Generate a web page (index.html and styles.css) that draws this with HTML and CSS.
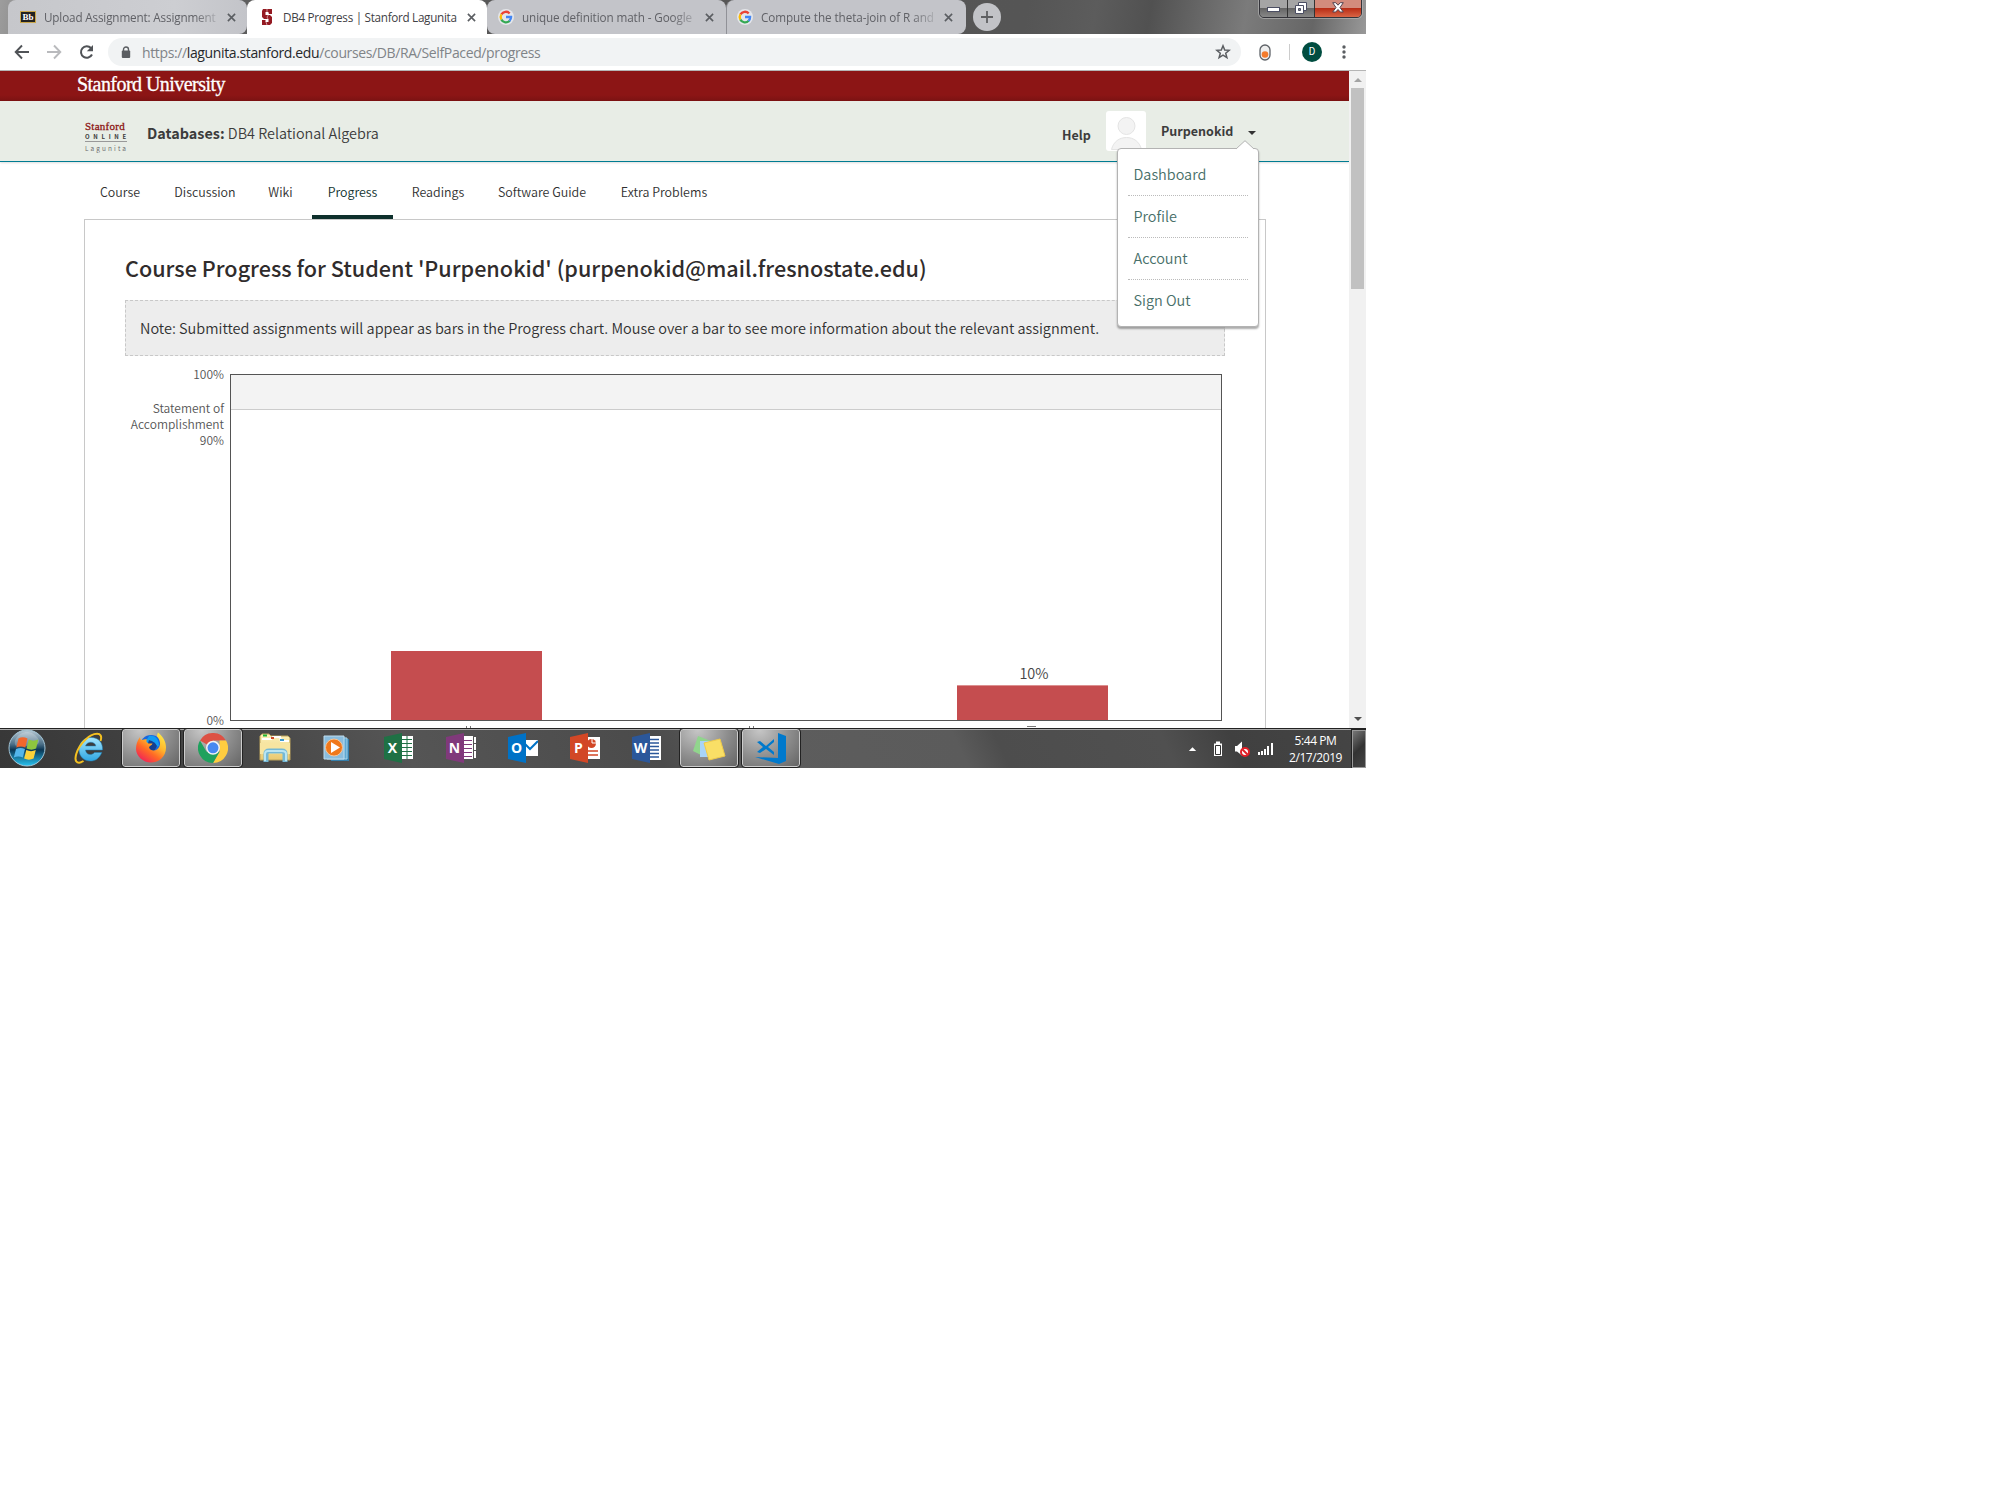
FILE: index.html
```html
<!DOCTYPE html>
<html lang="en">
<head>
<meta charset="utf-8">
<title>DB4 Progress | Stanford Lagunita</title>
<link rel="stylesheet" href="styles.css">
</head>
<body>
<svg width="0" height="0" class="defs" aria-hidden="true">
  <defs>
    <symbol id="close" viewBox="0 0 10 10"><path d="M1 1l8 8M9 1l-8 8" stroke="#5b5e62" stroke-width="1.8"/></symbol>
    <symbol id="google" viewBox="0 0 16 16">
      <circle cx="8" cy="8" r="8" fill="#e4e6ea"/>
      <g fill="none" stroke-width="2.3">
        <path d="M3.4 5.4A5.2 5.2 0 0 1 11.7 4.4" stroke="#ea4335"/>
        <path d="M3.4 10.6A5.2 5.2 0 0 1 3.4 5.4" stroke="#fbbc05"/>
        <path d="M11.7 11.8A5.2 5.2 0 0 1 3.4 10.6" stroke="#34a853"/>
        <path d="M8 8h5.1A5.1 5.1 0 0 1 11.5 11.8" stroke="#4285f4"/>
      </g>
    </symbol>
    <linearGradient id="gStart" x1="0" y1="0" x2="0" y2="1"><stop offset="0" stop-color="#b9cbd6"/><stop offset=".4" stop-color="#496d86"/><stop offset=".55" stop-color="#0b3654"/><stop offset="1" stop-color="#27c4f2"/></linearGradient>
    <linearGradient id="gFox" x1=".9" y1="0" x2=".2" y2="1"><stop offset="0" stop-color="#fff04a"/><stop offset=".4" stop-color="#ffb52c"/><stop offset=".65" stop-color="#ff6a25"/><stop offset="1" stop-color="#ef1a5e"/></linearGradient>
    <linearGradient id="gIe" x1="0" y1="0" x2="0" y2="1"><stop offset="0" stop-color="#a5e6fd"/><stop offset="1" stop-color="#2fa6e2"/></linearGradient>
    <linearGradient id="gFolder" x1="0" y1="0" x2="0" y2="1"><stop offset="0" stop-color="#fdf3bd"/><stop offset="1" stop-color="#e9c970"/></linearGradient>
  </defs>
</svg>
<div class="desktop">
  <header class="tabstrip">
    <div class="tab first">
      <span class="bb">Bb</span>
      <span class="tab-title t1">Upload Assignment: Assignment</span>
      <svg class="x"><use href="#close"/></svg>
    </div>
    <div class="tab active">
      <svg class="fav" viewBox="0 0 16 16"><path d="M4 0h9v5H9.500V3H6.500v3H11l2 2v6l-2 2H3v-5h3.500v2h3v-3H5L3 8V2z" fill="#941a22"/><path d="M8 0v3l2 2-2 3 1 2-2 3 1 3" stroke="#fff" stroke-width=".7" fill="none" opacity=".75"/></svg>
      <span class="tab-title t2">DB4 Progress | Stanford Lagunita</span>
      <svg class="x"><use href="#close"/></svg>
    </div>
    <div class="tab">
      <svg class="fav"><use href="#google"/></svg>
      <span class="tab-title t3">unique definition math - Google</span>
      <svg class="x"><use href="#close"/></svg>
    </div>
    <div class="tab last">
      <svg class="fav"><use href="#google"/></svg>
      <span class="tab-title t4">Compute the theta-join of R and</span>
      <svg class="x"><use href="#close"/></svg>
    </div>
    <div class="newtab"><svg width="12" height="12"><path d="M6 0v12M0 6h12" stroke="#5f6062" stroke-width="1.8"/></svg></div>
    <div class="controls">
      <span class="ctl min"><svg width="13" height="6"><rect x=".5" y=".5" width="12" height="4" fill="#fff" stroke="#4b4e63"/></svg></span>
      <span class="ctl max"><svg width="12" height="12"><path d="M3.500 .5h8v8h-8z" fill="#fff" stroke="#4b4e63"/><path d="M.5 3.500h8v8h-8z" fill="#fff" stroke="#4b4e63"/><path d="M3.500 6.500h2v2h-2z" fill="#888" stroke="#4b4e63"/></svg></span>
      <span class="ctl shut"><svg width="12" height="11" viewBox="0 0 12 11"><path d="M.7.7h3L6 3.200 8.300.7h3L8 5.500l3.300 4.500h-3L6 7.500 3.700 10h-3L4 5.500z" fill="#fff" stroke="#524350"/></svg></span>
    </div>
  </header>

  <div class="toolbar">
    <svg class="nav-icons" width="79" height="36" fill="none" stroke-width="1.9">
      <path d="M29 18H16M22 11.500L15.700 18l6.300 6.500" stroke="#505357"/>
      <path d="M47 18h13M54 11.500l6.300 6.500-6.300 6.500" stroke="#b9babd"/>
    </svg>
    <svg class="reload" width="16" height="16" fill="none"><path d="M13 10.500A5.800 5.800 0 1 1 12 4" stroke="#505357" stroke-width="2"/><path d="M14 1v6.200H7.800z" fill="#505357"/></svg>
    <div class="omnibox">
      <svg class="lock" width="10" height="13"><path d="M2.500 5V3.500a2.500 2.500 0 0 1 5 0V5" fill="none" stroke="#5b5e62" stroke-width="1.400"/><rect x=".8" y="4.500" width="8.400" height="7.500" rx="1" fill="#5b5e62"/></svg>
      <span class="url">https://<b>lagunita.stanford.edu</b>/courses/DB/RA/SelfPaced/progress</span>
      <svg class="star" width="16" height="16" viewBox="0 0 16 16"><path d="M8 1.800l1.700 4.200 4.500.3-3.500 2.900 1.200 4.400L8 11.200l-3.900 2.400 1.200-4.400L1.800 6.300l4.500-.3z" fill="none" stroke="#5b5e62" stroke-width="1.500"/></svg>
    </div>
    <svg class="ext" width="12" height="17"><rect x="1" y="1" width="10" height="15" rx="5" fill="#eee" stroke="#5e6267" stroke-width="1.300"/><circle cx="6" cy="10.500" r="3.300" fill="#f47b2c"/></svg>
    <i class="divider"></i>
    <span class="profile">D</span>
    <svg class="dots" width="4" height="14" fill="#5b5e62"><circle cx="2" cy="2" r="1.700"/><circle cx="2" cy="7" r="1.700"/><circle cx="2" cy="12" r="1.700"/></svg>
  </div>

  <div class="viewport">
    <div class="page">
      <div class="brand"><span>Stanford University</span></div>
      <div class="site-head">
        <div class="logo"><span class="l1">Stanford</span><span class="l2">ONLINE</span><span class="l3">Lagunita</span></div>
        <div class="course"><b>Databases:</b> DB4 Relational Algebra</div>
        <a class="help">Help</a>
        <svg class="avatar" width="40" height="40"><rect width="40" height="40" rx="3" fill="#fff"/><circle cx="20.500" cy="15" r="8.500" fill="#f3f3f3" stroke="#e4e4e4"/><path d="M5.500 38.500c2-8 8-12 15-12s13 4 15 12z" fill="#f3f3f3" stroke="#e4e4e4"/></svg>
        <span class="user">Purpenokid</span>
        <i class="caret"></i>
      </div>
      <nav class="course-nav">
        <a class="n1">Course</a><a class="n2">Discussion</a><a class="n3">Wiki</a><a class="n4 current">Progress</a><a class="n5">Readings</a><a class="n6">Software Guide</a><a class="n7">Extra Problems</a>
      </nav>
      <main class="content">
        <h1>Course Progress for Student 'Purpenokid' (purpenokid@mail.fresnostate.edu)</h1>
        <p class="note">Note: Submitted assignments will appear as bars in the Progress chart. Mouse over a bar to see more information about the relevant assignment.</p>
        <div class="chart">
          <div class="axis">
            <span class="top">100%</span>
            <span class="mid">Statement of<br>Accomplishment<br>90%</span>
            <span class="bottom">0%</span>
          </div>
          <div class="plot">
            <div class="band"></div>
            <div class="bars">
              <div class="bar a"></div>
              <div class="barwrap"><span>10%</span><div class="bar b"></div></div>
            </div>
          </div>
        </div>
        <div class="ticks"><i></i><i></i><i></i></div>
      </main>
      <div class="menu">
        <svg class="notch" width="18" height="18"><path d="M0 9L9 .7 18 9v2L9 17 0 11z" fill="#fff"/><path d="M0 9L9 .7 18 9" fill="none" stroke="#b3b3b3"/></svg>
        <a>Dashboard</a><a>Profile</a><a>Account</a><a>Sign Out</a>
      </div>
    </div>
    <div class="scroll"><i class="up"></i><i class="thumb"></i><i class="down"></i></div>
  </div>

  <footer class="taskbar">
    <div class="start"><svg width="38" height="38" viewBox="0 0 38 38"><circle cx="19" cy="19" r="18" fill="url(#gStart)" stroke="#a3c4d5"/><path d="M8 17C4 12 11 3 19 3s15 9 11 12c-7 5-15 0-22 2z" fill="#fff" opacity=".22"/><path d="M10.500 9.500c3-2 6-1.500 9 0l-2.200 9c-3-1.500-6-1.500-9 0z" fill="#f1672d"/><path d="M20.800 10.500c3 1.500 6 1.500 9.500 0l-2.200 9c-3 1.500-6.500 1.500-9.500 0z" fill="#8ec63f"/><path d="M8 20c3-1.500 6-1.500 9 0l-2.200 8.500c-3-1.500-6-1.500-9 0z" fill="#53b5ea"/><path d="M18.300 21c3 1.500 6.500 1.500 9.500 0l-2.200 8.500c-3 1.500-6.500 1.500-9.500 0z" fill="#fcd23a"/></svg></div>
    <div class="app"><svg width="32" height="32" viewBox="0 0 32 32"><path d="M29.500 18H12.500c.5 5 6 6 9 2.500h7.300C26 27 22 29 17.500 29 11 29 6 24.500 6 17.500S11 5.500 18 5.500c7.500 0 12 5 11.500 12.500zM12.500 14h10.300c-.8-5-9-5-10.300 0z" fill="url(#gIe)" stroke="#1e80b9" stroke-width=".5"/><path d="M27.500 9C31-1 20 0 12 8 3 17 0 29 5 30.500c2 .5 4-.5 5.500-1.500" fill="none" stroke="#f4c020" stroke-width="2"/></svg></div>
    <div class="app open"><svg width="32" height="32" viewBox="0 0 32 32"><circle cx="16" cy="14" r="11" fill="#1867df"/><path d="M14 4c5-1 10 2 10 10l-9 3-6-5z" fill="#129cf2"/><path d="M14 8c3 1 6 2 8 6l-4 7-7-3z" fill="#153f8f"/><path d="M5 5c0 2 .5 3 2 3 2-1 4-1 5-.5-1 1-1 3 1.500 4h4c-.5 2-3 2-3.500 4 1 3 5 4 8 2 5-4 3-10 0-13 0-2 .5-3 1-4 5 4 8 9 8 15 0 9-7 15-15 15S1 24 1 17c0-4 1-8 4-12z" fill="url(#gFox)"/></svg></div>
    <div class="app open"><svg width="30" height="30" viewBox="0 0 30 30"><path d="M15 15L2 7.500A15 15 0 0 1 28 7.500H15z" fill="#dd5144"/><path d="M28 7.500A15 15 0 0 1 15 30l6.500-11.200V7.500z" fill="#ffcd40"/><path d="M2 7.500A15 15 0 0 0 15 30l6.500-11.200L8.500 18.700z" fill="#1fa15d"/><circle cx="15" cy="14.800" r="7" fill="#f3f3f3"/><circle cx="15" cy="14.800" r="5.500" fill="#4688f1"/></svg></div>
    <div class="app"><svg width="34" height="32" viewBox="0 0 34 32"><path d="M2 28V4l2-2h7l2 2h17l2 2v22z" fill="url(#gFolder)" stroke="#bda45c"/><path d="M4 7h9l2-2h7l1 4h8" fill="none" stroke="#fff" stroke-width="2"/><path d="M5 3.500h4" stroke="#1eb534" stroke-width="2"/><path d="M13 6h3" stroke="#ce4a2a" stroke-width="2"/><path d="M22 8h4" stroke="#3c98cf" stroke-width="2"/><path d="M2 11h30v11H2z" fill="#f7e5a1"/><path d="M8 30V22q0-3 3-3h13q3 0 3 3v8" fill="none" stroke="#75b9d6" stroke-width="5"/><path d="M7 29V22q0-3 3-3h14q4 0 4 3v7" fill="none" stroke="#b9e5f3" stroke-width="2"/></svg></div>
    <div class="app"><svg class="wmp" width="28" height="28" viewBox="0 0 28 28"><path d="M6 4l20 1v22H8z" fill="#347eab"/><path d="M4 3l20 1v21H4z" fill="#5fa8d2" stroke="#a5d4ed"/><path d="M1 2h20v23H1z" fill="#8abdde" stroke="#bfddee"/><circle cx="11" cy="13.500" r="8.500" fill="#f0781b" stroke="#f6c69a"/><path d="M8 8l9 5.500L8 19z" fill="#fff"/></svg></div>
    <div class="app"><span class="office"><svg width="30" height="32"><path d="M17 4h12v23H17z" fill="#fff"/><path d="M17 7.500h11M17 11.500h11M17 15.500h11M17 19.500h11M17 23.500h11M23 4v23" stroke="#1f7145"/><path d="M0 5L18 1v30L0 27z" fill="#1f7145"/></svg><b>X</b></span></div>
    <div class="app"><span class="office"><svg width="30" height="32"><path d="M17 4h10v23H17zM28 5h2v6h-2zM28 12h2v6h-2zM28 19h2v7h-2z" fill="#fff"/><path d="M17 8.500h9M17 12.500h9M17 16.500h9M17 20.500h9M17 24.500h9" stroke="#80397b"/><path d="M0 5L18 1v30L0 27z" fill="#80397b"/></svg><b>N</b></span></div>
    <div class="app"><span class="office"><svg width="30" height="32"><path d="M17 8h13v16H17z" fill="#fff"/><path d="M17 12l5 5 8-8" fill="none" stroke="#0072c6" stroke-width="2"/><path d="M0 5L18 1v30L0 27z" fill="#0072c6"/></svg><b>O</b></span></div>
    <div class="app"><span class="office"><svg width="30" height="32"><path d="M17 5h13v22H17z" fill="#fff"/><circle cx="21.500" cy="11.500" r="4.500" fill="#d24726"/><path d="M22 6v5h5" fill="none" stroke="#fff"/><path d="M18 19h10M18 23h10" stroke="#d24726" stroke-width="1.500"/><path d="M0 5L18 1v30L0 27z" fill="#d24726"/></svg><b>P</b></span></div>
    <div class="app"><span class="office"><svg width="30" height="32"><path d="M17 4h12v24H17z" fill="#fff"/><path d="M17 7.500h10M17 11h10M17 14.500h10M17 18h10M17 21.500h10M17 25h10" stroke="#2b579a" stroke-width="1.300"/><path d="M0 5L18 1v30L0 27z" fill="#2b579a"/></svg><b>W</b></span></div>
    <div class="app open"><svg width="34" height="28" viewBox="0 0 34 28"><path d="M6 2l13 5-6 16L1 17z" fill="#91d58d"/><path d="M8 7h15v16H8z" fill="#a8d4f7"/><path d="M12 9l16-4 5 17-16 4z" fill="#f9df66" stroke="#f0cb49"/></svg></div>
    <div class="app open"><svg width="34" height="32" viewBox="0 0 34 32"><path d="M24 1l8 3v25l-7 3L1 25l23 1z" fill="#0079cc"/><path d="M3 10l3-1 6 5 8-7v3l-6 5 6 5v3l-8-6-6 4-3-1 6-5z" fill="#0079cc"/></svg></div>
    <div class="tray">
      <svg class="chev" width="9" height="6"><path d="M.8 5L4.500 1.200 8.200 5z" fill="#fff"/></svg>
      <svg class="bat" width="10" height="16"><path d="M3 .5h4v2h2v12.500H1V2.500h2z" fill="#fff"/><path d="M2.500 4.500h5v9h-5z" fill="#fff" stroke="#333"/></svg>
      <svg class="vol" width="16" height="16"><path d="M1 5h2l5-4.500v14L3 10.500H1z" fill="#fff"/><circle cx="11" cy="11" r="4" fill="#fff" stroke="#e01e26" stroke-width="2"/><path d="M8.500 8.500l5 5" stroke="#e01e26" stroke-width="2"/></svg>
      <svg class="sig" width="16" height="12" fill="#fff"><path d="M0 9h2v3H0zM3 8h2v4H3zM6 6h2v6H6zM9 3h2v9H9zM13 0h2v12h-2z"/></svg>
      <div class="clock"><span>5:44 PM</span><span class="date">2/17/2019</span></div>
      <i class="show"></i>
    </div>
  </footer>
</div>
</body>
</html>
```
FILE: styles.css
```css
* { box-sizing: border-box; }
body { margin: 0; background: #fff; font-family: "Noto Sans CJK SC", sans-serif; font-weight: 350; color: #3c3c3c; }
.defs { position: absolute; }
svg { display: block; flex: none; }
b { font-weight: 700; }
.desktop { width: 1366px; height: 768px; overflow: hidden; display: flex; flex-direction: column; }

/* browser tabs */
.tabstrip { height: 34px; flex: none; display: flex; font-family: "Open Sans", sans-serif; font-weight: 400; padding-left: 8px;
  background: linear-gradient(100deg, #9d9d9d 0, #8c8c8c 2%, #585858 20%, #555 75%, #5c5c5c 80%, #515151 84%, #7b7b7b 91%, #666 96%, #999 100%); }
.tab { width: 239px; display: flex; align-items: center; background: #c3c4c9; border-radius: 8px 8px 0 8px; padding-left: 11px; }
.tab.first { background: linear-gradient(90deg, #c6c7cb, #cdced2 70%, #c3c4c9); padding-left: 12px; border-radius: 8px 8px 8px 0; }
.tab.active { width: 240px; background: #fff; border-radius: 8px 8px 0 0; padding-left: 12px; }
.tab.last { width: 240px; border-radius: 8px 8px 8px 0; border-left: 1px solid #909197; padding-left: 10px; }
.fav { width: 16px; height: 16px; }
.bb { width: 16px; height: 12px; background: #222; border: 1px solid #c8a548; color: #fff; font: bold 9px/10px "Liberation Serif", serif; text-align: center; }
.tab-title { width: 174px; margin-left: 8px; white-space: nowrap; font-size: 11.700px; line-height: 16px; padding-bottom: 1px; letter-spacing: -.1px; color: #606166;
  -webkit-mask-image: linear-gradient(90deg, #000 86%, #0003); mask-image: linear-gradient(90deg, #000 86%, #0003); }
.t1 { letter-spacing: -.15px; }
.t4 { letter-spacing: -.06px; }
.active .tab-title { color: #3f4145; width: 178px; letter-spacing: -.29px; mask-image: none; -webkit-mask-image: none; }
.x { width: 9px; height: 9px; margin-left: 9px; }
.active .x { margin-left: 6px; }
.newtab { width: 28px; height: 28px; border-radius: 50%; margin: 3px 0 0 7px; background: #c2c3c7; display: flex; align-items: center; justify-content: center; }
.controls { margin: -1px 4px 0 auto; height: 19px; display: flex; border: 1px solid #34343a; border-radius: 0 0 5px 5px; overflow: hidden; box-shadow: 0 0 0 1px #bbb9; }
.ctl { display: flex; justify-content: center; align-items: center; background: linear-gradient(#a5a5a5 48%, #666 50%, #888); border-right: 1px solid #333; }
.min { width: 28px; padding-top: 3px; } .max { width: 27px; padding-bottom: 2px; }
.shut { width: 46px; border: 0; padding-bottom: 2px; background: linear-gradient(#d38b7c 48%, #b92d16 50%, #d96545); }

/* toolbar */
.toolbar { height: 37px; flex: none; display: flex; align-items: center; border-bottom: 1px solid #b5b5b5; background: #fff; }
.omnibox { width: 1133px; height: 28px; margin-left: 13px; border-radius: 14px; background: #f1f3f4; display: flex; align-items: center; padding-left: 13px; }
.url { font: 14px/24px "Open Sans", sans-serif; margin-left: 11px; color: #808488; letter-spacing: -.37px; white-space: nowrap; padding-top: 1px; }
.url b { font-weight: 400; color: #26282b; }
.star { margin: 0 10px 0 auto; }
.ext { margin-left: 18px; }
.divider { width: 1px; height: 16px; background: #ccc; margin-left: 18px; }
.profile { width: 20px; height: 20px; margin-left: 12px; border-radius: 50%; background: #004d40; color: #fff; font: 10px/20px Roboto, sans-serif; text-align: center; }
.dots { margin-left: 20px; }

/* page */
.viewport { height: 657px; flex: none; display: flex; }
.page { width: 1349px; position: relative; overflow: hidden; background: #fff; }
.brand { height: 30px; padding-left: 77px; background: linear-gradient(#8c1515 80%, #7b1212); color: #fff; font: 20px/27px "Liberation Serif", serif; letter-spacing: -.55px; -webkit-text-stroke: .3px #fff; white-space: nowrap; }
.site-head { height: 61px; background: #e8ede6; border-bottom: 1px solid #007c92; box-shadow: 0 1px 2px #0002; display: flex; padding-left: 85px; white-space: nowrap; }
.logo { width: 42px; padding-top: 18px; display: flex; flex-direction: column; }
.l1 { font: 11px/14px "Liberation Serif", serif; color: #8c1515; -webkit-text-stroke: .3px #8c1515; letter-spacing: .25px; }
.l2 { font-size: 6px; font-weight: 700; line-height: 7px; letter-spacing: 3.700px; border-bottom: 1px solid #999; height: 9px; }
.l3 { font-size: 6.500px; line-height: 12px; letter-spacing: 2.100px; color: #666; }
.course { width: 915px; margin-left: 20px; font-size: 14.400px; line-height: 64px; }
.help { width: 44px; font-size: 12.500px; font-weight: 700; line-height: 67px; }
.avatar { margin-top: 10px; }
.user { width: 87px; margin-left: 15px; font-size: 12.500px; font-weight: 700; line-height: 60px; }
.caret { width: 0; height: 0; border: 4px solid transparent; border-top-color: #333; margin-top: 30px; }
.course-nav { height: 57px; padding-left: 84px; display: flex; gap: 4px; font-size: 12.450px; line-height: 60px; white-space: nowrap; color: #303030; }
.course-nav a { text-align: center; height: 57px; }
.n1 { width: 72px; } .n2 { width: 90px; } .n3 { width: 55px; }
.n4 { width: 81px; } .n5 { width: 82px; } .n6 { width: 118px; } .n7 { width: 118px; }
.n2 { margin-right: -1px; }
.current { border-bottom: 4px solid #0e302c; color: #0e302c; }
.content { width: 1182px; height: 700px; margin-left: 84px; border: 1px solid #c8c8c8; padding: 0 40px; }
h1 { margin: 0; height: 80px; font-size: 21.600px; line-height: 96px; font-weight: 500; color: #302c2c; white-space: nowrap; }
.note { width: 1100px; height: 56px; margin: 0; background: #ededed; border: 1px dashed #c8c8c8; font-size: 14.470px; line-height: 53px; padding-left: 14px; white-space: nowrap; color: #303030; }
.chart { display: flex; margin-top: 18px; height: 347px; }
.axis { width: 105px; padding-right: 6px; text-align: right; font-size: 12px; line-height: 16px; color: #555; display: flex; flex-direction: column; white-space: nowrap; }
.top { margin-top: -8px; } .mid { margin-top: 18px; } .bottom { margin-top: auto; margin-bottom: -7px; }
.plot { width: 992px; height: 347px; border: 1px solid #545454; display: flex; flex-direction: column; }
.band { height: 35px; flex: none; background: #f3f3f3; border-bottom: 1px solid #ccc; }
.bars { flex: 1; display: flex; align-items: flex-end; padding-left: 160px; gap: 415px; }
.bar { width: 151px; background: #c54d4f; }
.a { height: 69px; } .b { height: 35px; border-top: 1px solid #dc9090; }
.barwrap { text-align: center; font-size: 14.500px; line-height: 24px; color: #444; }
.barwrap span { padding-left: 3px; }
.ticks { display: flex; height: 2px; margin-top: 5px; padding-left: 341px; gap: 278px; }
.ticks i { width: 5px; height: 2px; border: solid #777; border-width: 0 1px; }
.ticks i:last-child { width: 9px; border-width: 1px 0 0; margin-left: -5px; }
.menu { position: absolute; left: 1117px; top: 77px; width: 142px; height: 179px; background: #fff; border: 1px solid #b3b3b3; border-radius: 4px; box-shadow: 0 2px 2px #0005; padding: 5px 10px; font-size: 14.450px; color: #486f69; }
.menu a { display: block; height: 42px; line-height: 39px; padding-left: 5.500px; border-bottom: 1px dotted #bbb; white-space: nowrap; }
.menu a:last-child { border: 0; }
.notch { position: absolute; left: 118px; top: -9px; }
.scroll { width: 17px; background: #f1f1f1; display: flex; flex-direction: column; align-items: center; }
.up, .down { border: 4px solid transparent; border-top: 0; border-bottom: 4px solid #a3a3a3; margin-top: 7px; }
.thumb { width: 13px; height: 201px; margin-top: 6px; background: #c1c1c1; }
.down { border: 4px solid transparent; border-bottom: 0; border-top: 4px solid #505050; margin: auto 0 7px; }

/* taskbar */
.taskbar { height: 40px; flex: none; display: flex; align-items: flex-start; gap: 4px; border-top: 1px solid #222; box-shadow: inset 0 1px #aaa; font-weight: 400;
  background: linear-gradient(65deg, #373737 0, #484848 20%, #555 30%, #4b4b4b 48%, #5d5d5d 55%, #5b5b5b 70%, #4d4d4d 73%, #505050 85%, #404040 90%, #454545 100%); }
.start { width: 56px; padding-left: 8px; }
.app { width: 58px; height: 38px; display: flex; align-items: center; justify-content: center; }
.open { border: 1px solid #ccc; border-radius: 3px; outline: 1px solid #222; background: radial-gradient(ellipse at 30% 0, #c6c6c6 0, #8d8d8d 55%, #656565 100%); }
.wmp { margin-right: 1px; }
.office { position: relative; width: 30px; height: 32px; }
.office b { position: absolute; left: 0; top: 0; width: 17px; text-align: center; color: #fff; font: bold 14px/31px "Open Sans", sans-serif; }
.tray { margin-left: auto; display: flex; align-items: center; height: 39px; color: #fff; }
.bat { margin-left: 16px; } .vol { margin-left: 11px; } .sig { margin-left: 8px; }
.clock { width: 75px; display: flex; flex-direction: column; align-items: center; font: 12px/17px "Open Sans", sans-serif; letter-spacing: -.42px; margin-left: 4px; margin-right: -1px; }
.show { width: 14px; height: 38px; border: 1px solid #999; outline: 1px solid #222; background: linear-gradient(135deg, #777, #333 50%, #444); }
```
